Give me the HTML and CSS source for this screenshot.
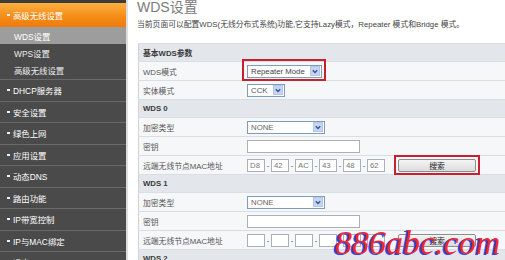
FILE: index.html
```html
<!DOCTYPE html>
<html lang="zh-CN">
<head>
<meta charset="utf-8">
<title>WDS设置</title>
<link rel="stylesheet" href="styles.css">
</head>
<body>
<div class="page">
  <nav class="menu">
    <div class="menu-top"></div>
    <div class="menu-item open">高级无线设置</div>
    <div class="sub active">WDS设置</div>
    <div class="sub">WPS设置</div>
    <div class="sub">高级无线设置</div>
    <div class="menu-item">DHCP服务器</div>
    <div class="menu-item">安全设置</div>
    <div class="menu-item">绿色上网</div>
    <div class="menu-item">应用设置</div>
    <div class="menu-item">动态DNS</div>
    <div class="menu-item">路由功能</div>
    <div class="menu-item">IP带宽控制</div>
    <div class="menu-item">IP与MAC绑定</div>
    <div class="menu-item">退出</div>
  </nav>

  <main class="content">
    <h1>WDS设置</h1>
    <p class="intro">当前页面可以配置WDS(无线分布式系统)功能,它支持Lazy模式，Repeater 模式和Bridge 模式。</p>

    <table class="params">
      <tr class="head"><td colspan="2">基本WDS参数</td></tr>
      <tr>
        <td class="label">WDS模式</td>
        <td class="value">
          <span class="marked">
            <span class="select w-mode">Repeater Mode<span class="arrow"><svg viewBox="0 0 9 9" width="9" height="9"><path d="M2 3 L4.5 5.5 L7 3" fill="none" stroke="#3d5386" stroke-width="1.6"/></svg></span></span>
          </span>
        </td>
      </tr>
      <tr>
        <td class="label">实体模式</td>
        <td class="value">
          <span class="select w-cck">CCK<span class="arrow"><svg viewBox="0 0 9 9" width="9" height="9"><path d="M2 3 L4.5 5.5 L7 3" fill="none" stroke="#3d5386" stroke-width="1.6"/></svg></span></span>
        </td>
      </tr>

      <tr class="head"><td colspan="2">WDS 0</td></tr>
      <tr>
        <td class="label">加密类型</td>
        <td class="value">
          <span class="select w-enc">NONE<span class="arrow"><svg viewBox="0 0 9 9" width="9" height="9"><path d="M2 3 L4.5 5.5 L7 3" fill="none" stroke="#3d5386" stroke-width="1.6"/></svg></span></span>
        </td>
      </tr>
      <tr>
        <td class="label">密钥</td>
        <td class="value"><span class="field"></span></td>
      </tr>
      <tr>
        <td class="label">远端无线节点MAC地址</td>
        <td class="value">
          <div class="mac">
            <span class="octet">D8</span><span class="dash">-</span>
            <span class="octet">42</span><span class="dash">-</span>
            <span class="octet">AC</span><span class="dash">-</span>
            <span class="octet">43</span><span class="dash">-</span>
            <span class="octet">48</span><span class="dash">-</span>
            <span class="octet">62</span>
            <span class="marked btn-wrap"><span class="button">搜索</span></span>
          </div>
        </td>
      </tr>

      <tr class="head"><td colspan="2">WDS 1</td></tr>
      <tr>
        <td class="label">加密类型</td>
        <td class="value">
          <span class="select w-enc">NONE<span class="arrow"><svg viewBox="0 0 9 9" width="9" height="9"><path d="M2 3 L4.5 5.5 L7 3" fill="none" stroke="#3d5386" stroke-width="1.6"/></svg></span></span>
        </td>
      </tr>
      <tr>
        <td class="label">密钥</td>
        <td class="value"><span class="field"></span></td>
      </tr>
      <tr>
        <td class="label">远端无线节点MAC地址</td>
        <td class="value">
          <div class="mac">
            <span class="octet"></span><span class="dash">-</span>
            <span class="octet"></span><span class="dash">-</span>
            <span class="octet"></span><span class="dash">-</span>
            <span class="octet"></span><span class="dash">-</span>
            <span class="octet"></span><span class="dash">-</span>
            <span class="octet"></span>
            <span class="btn-wrap"><span class="button">搜索</span></span>
          </div>
        </td>
      </tr>

      <tr class="head"><td colspan="2">WDS 2</td></tr>
    </table>
  </main>

  <div class="watermark">886abc.com</div>
</div>
</body>
</html>
```

FILE: styles.css
```css
body { margin: 0; font-family: "Liberation Sans", "Noto Sans CJK SC", sans-serif; overflow: hidden; }

.page { position: relative; display: flex; width: 505px; height: 260px; overflow: hidden; background: #fff; }

/* left menu */
.menu { width: 126px; flex: none; background: #4a4a4a; border-right: 2px solid #dedede; font-size: 8.4px; color: #fff; }

.menu-top { height: 3px; background: #3c3c3c; }

.menu-item { display: flex; align-items: center; height: 20.5px; padding-left: 7px; border-top: 1px solid #6a6a6a; }

.menu-item::before { content: ''; width: 3px; height: 2px; margin-right: 3px; background: #f2f2f2; }

.menu-item.open { height: 24px; border-top: 0; background: linear-gradient(#fcb040, #f48a16 60%, #ee7c0c); }

.sub { display: flex; align-items: center; height: 17px; padding-left: 14px; color: #ececec; }

.sub.active { background: #9d9d9d; color: #fff; }

.sub + .menu-item { margin-top: 1px; }

/* content */
.content { flex: 1; min-width: 0; padding-left: 9px; overflow: hidden; }

h1 { margin: 0; font-size: 14px; line-height: 14px; font-weight: normal; color: #7b7b7b; }

.intro { margin: 6px 0 13px; font-size: 7.8px; line-height: 10px; color: #444; white-space: nowrap; }

.params { width: 420px; margin-left: 1px; border-collapse: collapse; border: 1px solid #ccd3da; font-size: 7.8px; }

.params td { padding: 0 0 0 4px; border-top: 1px solid #d9dee4; }

.params tr { height: 19px; background: #f5f7f9; }

.params tr.head { height: 18px; background: #e3e7ec; }

.params tr.head td { font-weight: bold; color: #3a3a3a; }

.label { width: 98px; color: #555; white-space: nowrap; }

.params td.value { padding-left: 6px; }

/* form controls */
.select { display: inline-flex; align-items: center; vertical-align: middle; height: 13px; box-sizing: border-box; padding: 0 1px 0 3px; border: 1px solid #7f9db9; background: #fff; color: #555; }

.w-mode { width: 75px; color: #444; }

.w-cck { width: 38px; }

.w-enc { width: 78px; color: #666; }

.arrow { display: flex; align-items: center; justify-content: center; width: 10px; height: 10px; margin-left: auto; background: #c5d5f6; border: 1px solid #b4c6ec; box-sizing: border-box; }

.field { display: inline-block; vertical-align: middle; width: 113px; height: 13px; box-sizing: border-box; border: 1px solid #a9b0b8; background: #fff; }

.mac { display: flex; align-items: center; }

.octet { width: 18px; height: 13px; box-sizing: border-box; padding-left: 2px; border: 1px solid #a9b0b8; background: #fff; color: #777; line-height: 11px; }

.dash { width: 6px; text-align: center; color: #555; }

.btn-wrap { margin-left: 13px; }

.button { display: flex; align-items: center; justify-content: center; width: 78px; height: 13px; box-sizing: border-box; border: 1px solid #8d8d8d; border-radius: 2px; background: linear-gradient(#f4f4f4, #dcdcdc); color: #222; }

/* red highlight frames */
.marked { position: relative; display: inline-flex; vertical-align: middle; }

.marked::after { content: ''; position: absolute; top: -6px; right: -4px; bottom: -3px; left: -5px; border: 2px solid #c8202c; }

.btn-wrap.marked::after { top: -4px; right: -4px; bottom: -3px; left: -4px; }

/* site watermark over the corner */
.watermark { position: absolute; left: 335px; top: 226px; font: italic 34px/34px "Liberation Serif", serif; color: #f0282e; text-shadow: -2px 1px 0 #2b46e6; white-space: nowrap; }
```
